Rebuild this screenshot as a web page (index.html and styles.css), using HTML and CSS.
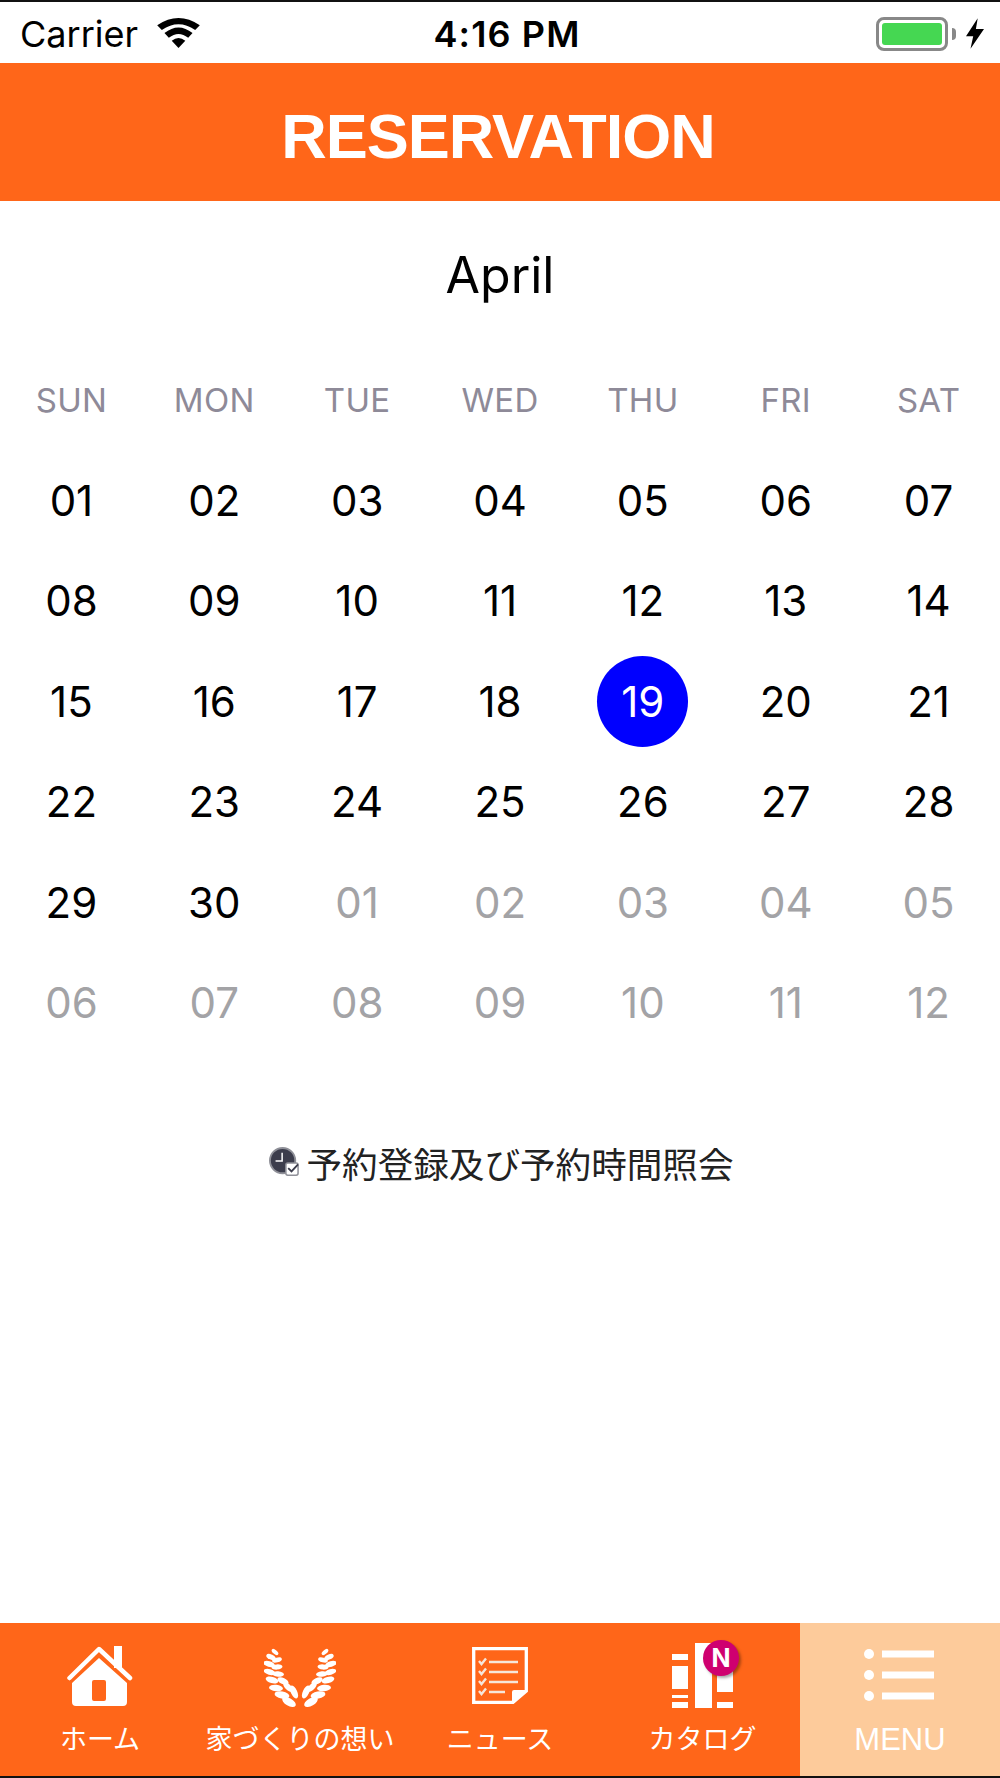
FILE: index.html
```html
<!DOCTYPE html>
<html lang="ja">
<head>
    <meta charset="UTF-8">
    <meta name="viewport" content="width=device-width, initial-scale=1.0">
    <title>Reservation</title>
    <link rel="stylesheet" href="styles.css">
</head>
<body>
    <div class="status-bar">
        <div class="status-left">
            <span class="carrier">Carrier</span>
            <svg class="wifi" viewBox="0 0 44 32" width="43" height="31">
                <path d="M22 31 L15 23.5 Q22 18 29 23.5 Z"/>
                <path d="M12 20.5 L7.5 15.5 Q22 4 36.5 15.5 L32 20.5 Q22 12.5 12 20.5 Z"/>
                <path d="M4.8 12.5 L0 7.5 Q22 -7.5 44 7.5 L39.2 12.5 Q22 0.5 4.8 12.5 Z"/>
            </svg>
        </div>
        <div class="status-time">4:16 PM</div>
        <div class="status-right">
            <div class="battery"><div class="battery-level"></div></div>
            <div class="battery-tip"></div>
            <svg class="bolt" viewBox="0 0 20 34" width="18" height="33">
                <path d="M13 0 L0 20 L8 20 L5 34 L20 12 L11 12 Z"/>
            </svg>
        </div>
    </div>

    <header class="page-header">
        <h1>RESERVATION</h1>
    </header>

    <main class="content">
        <h2 class="month">April</h2>

        <div class="calendar">
            <div class="weekday">SUN</div>
            <div class="weekday">MON</div>
            <div class="weekday">TUE</div>
            <div class="weekday">WED</div>
            <div class="weekday">THU</div>
            <div class="weekday">FRI</div>
            <div class="weekday">SAT</div>

            <div class="day">01</div><div class="day">02</div><div class="day">03</div><div class="day">04</div><div class="day">05</div><div class="day">06</div><div class="day">07</div>
            <div class="day">08</div><div class="day">09</div><div class="day">10</div><div class="day">11</div><div class="day">12</div><div class="day">13</div><div class="day">14</div>
            <div class="day">15</div><div class="day">16</div><div class="day">17</div><div class="day">18</div><div class="day"><span class="today">19</span></div><div class="day">20</div><div class="day">21</div>
            <div class="day">22</div><div class="day">23</div><div class="day">24</div><div class="day">25</div><div class="day">26</div><div class="day">27</div><div class="day">28</div>
            <div class="day">29</div><div class="day">30</div><div class="day muted">01</div><div class="day muted">02</div><div class="day muted">03</div><div class="day muted">04</div><div class="day muted">05</div>
            <div class="day muted">06</div><div class="day muted">07</div><div class="day muted">08</div><div class="day muted">09</div><div class="day muted">10</div><div class="day muted">11</div><div class="day muted">12</div>
        </div>

        <div class="reserve-link">
            <svg class="reserve-icon" viewBox="0 0 32 32" width="30" height="30">
                <circle cx="14.5" cy="14.5" r="13.5" fill="#3c3d4c" stroke="#8f9098" stroke-width="2"/>
                <path d="M14 6 V15 H7" fill="none" stroke="#fff" stroke-width="1.6"/>
                <rect x="18" y="17" width="13" height="13" rx="2" fill="#fff" stroke="#8f9098" stroke-width="1.6"/>
                <path d="M20.5 22.5 L24 26 L31 18.5" fill="none" stroke="#3c3d4c" stroke-width="2"/>
            </svg>
            <span>予約登録及び予約時間照会</span>
        </div>
    </main>

    <nav class="tab-bar">
        <div class="tab">
            <svg class="tab-icon" viewBox="0 -2 66 66" width="66" height="66">
                <path d="M2.5 33 L32 4 L63 33" fill="none" stroke="#fff" stroke-width="4.5" stroke-linecap="round" stroke-linejoin="round"/>
                <rect x="47" y="1" width="8" height="22" fill="#fff"/>
                <path fill-rule="evenodd" d="M32 13 L60 38 V57 Q60 61 56 61 H9 Q5 61 5 57 V38 Z M27 35 Q25 35 25 37 V54 Q25 56 27 56 H37 Q39 56 39 54 V37 Q39 35 37 35 Z" fill="#fff"/>
            </svg>
            <span class="tab-label">ホーム</span>
        </div>
        <div class="tab">
            <svg class="tab-icon" viewBox="0 -6 72 66" width="72" height="66">
                <g id="laurel" fill="#fff">
                    <ellipse cx="11" cy="3" rx="4" ry="2" transform="rotate(40 11 3)"/>
                    <ellipse cx="7" cy="8" rx="5" ry="2.6" transform="rotate(25 7 8)"/>
                    <ellipse cx="13" cy="11" rx="5" ry="2.4" transform="rotate(-15 13 11)"/>
                    <ellipse cx="5" cy="15" rx="6" ry="2.8" transform="rotate(15 5 15)"/>
                    <ellipse cx="13" cy="18" rx="5.5" ry="2.6" transform="rotate(-5 13 18)"/>
                    <ellipse cx="5.5" cy="23" rx="6" ry="2.8" transform="rotate(15 5.5 23)"/>
                    <ellipse cx="14" cy="25" rx="6" ry="2.8" transform="rotate(5 14 25)"/>
                    <ellipse cx="8" cy="31" rx="6.5" ry="3.2" transform="rotate(15 8 31)"/>
                    <ellipse cx="19" cy="32" rx="6" ry="3" transform="rotate(25 19 32)"/>
                    <ellipse cx="12" cy="39" rx="7" ry="3.2" transform="rotate(5 12 39)"/>
                    <ellipse cx="24" cy="38" rx="6" ry="3" transform="rotate(45 24 38)"/>
                    <ellipse cx="18" cy="46" rx="7.5" ry="3.6" transform="rotate(10 18 46)"/>
                    <ellipse cx="30" cy="43" rx="7" ry="3.2" transform="rotate(65 30 43)"/>
                    <ellipse cx="25" cy="53" rx="7.5" ry="3.8" transform="rotate(30 25 53)"/>
                </g>
                <use href="#laurel" transform="matrix(-1 0 0 1 72 0)"/>
            </svg>
            <span class="tab-label">家づくりの想い</span>
        </div>
        <div class="tab">
            <svg class="tab-icon" viewBox="0 -4 56 66" width="56" height="66">
                <path d="M1.7 1.7 H54.3 V44 L41 55.3 H1.7 Z" fill="none" stroke="#fff" stroke-width="3.3"/>
                <path d="M55 43 L40 57 V45 Q40 43 42 43 Z" fill="#fff"/>
                <path d="M17 15 H46 M17 25 H46 M17 35 H46 M17 45 H33" fill="none" stroke="#f6e6da" stroke-width="2.4"/>
                <path d="M7 14 L9.5 17 L14 11.5 M7 24 L9.5 27 L14 21.5 M7 34 L9.5 37 L14 31.5 M7 44 L9.5 47 L14 41.5" fill="none" stroke="#f6e6da" stroke-width="2.4"/>
            </svg>
            <span class="tab-label">ニュース</span>
        </div>
        <div class="tab">
            <div class="catalog-icon">
                <svg class="tab-icon" viewBox="0 0 66 66" width="66" height="66">
                    <g fill="#fff">
                        <rect x="5" y="11" width="16" height="6"/>
                        <rect x="5" y="23" width="16" height="23"/>
                        <rect x="5" y="52" width="16" height="3"/>
                        <rect x="5" y="59" width="16" height="6"/>
                        <rect x="28" y="0" width="17" height="65"/>
                        <rect x="50" y="23" width="16" height="26"/>
                        <rect x="50" y="59" width="16" height="6"/>
                    </g>
                </svg>
                <span class="badge">N</span>
            </div>
            <span class="tab-label catalog-label">カタログ</span>
        </div>
        <div class="tab tab-active">
            <svg class="tab-icon" viewBox="0 -6 72 66" width="72" height="66">
                <g fill="#fff">
                    <circle cx="5" cy="5" r="5"/>
                    <circle cx="5" cy="26" r="5"/>
                    <circle cx="5" cy="47" r="5"/>
                    <rect x="18" y="1.5" width="52" height="7"/>
                    <rect x="18" y="22.5" width="52" height="7"/>
                    <rect x="18" y="43.5" width="52" height="7"/>
                </g>
            </svg>
            <span class="tab-label tab-label-latin">MENU</span>
        </div>
    </nav>
</body>
</html>
```

FILE: styles.css
```css
* {
    margin: 0;
    padding: 0;
    box-sizing: border-box;
}

body {
    font-family: 'Inter', 'Noto Sans CJK JP', sans-serif;
    background-color: #fff;
    color: #000;
    display: flex;
    flex-direction: column;
    min-height: 100vh;
}

.status-bar {
    height: 63px;
    border-top: 2px solid #111;
    display: grid;
    grid-template-columns: 1fr auto 1fr;
    align-items: center;
    padding: 2px 16px 0 20px;
}

.status-left {
    display: flex;
    align-items: center;
    gap: 19px;
}

.carrier {
    font-size: 36px;
}

.wifi path,
.bolt path {
    fill: #000;
}

.status-time {
    font-size: 36px;
    font-weight: 600;
    letter-spacing: 1.1px;
    margin-left: 10px;
}

.status-right {
    display: flex;
    align-items: center;
    justify-content: flex-end;
}

.battery {
    width: 72px;
    height: 34px;
    border: 3px solid #888;
    border-radius: 8px;
    padding: 3px;
}

.battery-level {
    height: 100%;
    background-color: #45d752;
    border-radius: 3px;
}

.battery-tip {
    width: 4px;
    height: 12px;
    margin-left: 4px;
    margin-right: 10px;
    background-color: #888;
    border-radius: 0 4px 4px 0;
}

.page-header {
    height: 138px;
    padding-top: 7px;
    padding-right: 4px;
    background-color: #ff6619;
    display: flex;
    align-items: center;
    justify-content: center;
}

.page-header h1 {
    font-family: 'Liberation Sans', sans-serif;
    font-size: 63px;
    font-weight: 700;
    letter-spacing: -1px;
    color: #fff;
}

.content {
    flex: 1;
}

.month {
    font-size: 50px;
    font-weight: 400;
    text-align: center;
    margin-top: 44px;
    line-height: 60px;
}

.calendar {
    display: grid;
    grid-template-columns: repeat(7, 1fr);
    grid-template-rows: 75.4px;
    grid-auto-rows: 100.4px;
    margin-top: 70px;
}

.weekday {
    height: 50px;
    display: flex;
    align-items: center;
    justify-content: center;
    font-size: 33px;
    letter-spacing: 0.3px;
    color: #8e8a98;
}

.day {
    display: flex;
    align-items: center;
    justify-content: center;
    font-size: 42px;
}

.muted {
    color: #a3a3a6;
}

.today {
    width: 91px;
    height: 91px;
    border-radius: 50%;
    background-color: #0000ff;
    color: #fff;
    display: flex;
    align-items: center;
    justify-content: center;
}

.reserve-link {
    display: flex;
    align-items: center;
    justify-content: center;
    gap: 8px;
    margin-top: 84px;
    padding-left: 2px;
    font-size: 35.6px;
    color: #222;
}

.tab-bar {
    height: 155px;
    display: grid;
    grid-template-columns: repeat(5, 1fr);
    background-color: #ff6619;
    border-bottom: 2px solid #111;
}

.tab {
    display: flex;
    flex-direction: column;
    align-items: center;
    padding-top: 20px;
    color: #fff;
}

.tab-active {
    background-color: #fdcb9b;
}

.tab-icon {
    display: block;
    filter: blur(0.5px);
}

.catalog-icon {
    position: relative;
}

.badge {
    position: absolute;
    top: -3px;
    right: -6px;
    width: 36px;
    height: 36px;
    border-radius: 50%;
    background-color: #cf0070;
    box-shadow: 2px 2px 3px rgba(0, 0, 0, 0.35);
    color: #fff;
    font-size: 25px;
    font-weight: 700;
    display: flex;
    align-items: center;
    justify-content: center;
}

.tab-label {
    font-size: 27px;
    line-height: 40px;
    margin-top: 11px;
}

.catalog-label {
    margin-left: 5px;
}

.tab-label-latin {
    font-family: 'Liberation Sans', sans-serif;
    font-size: 31px;
}
```
